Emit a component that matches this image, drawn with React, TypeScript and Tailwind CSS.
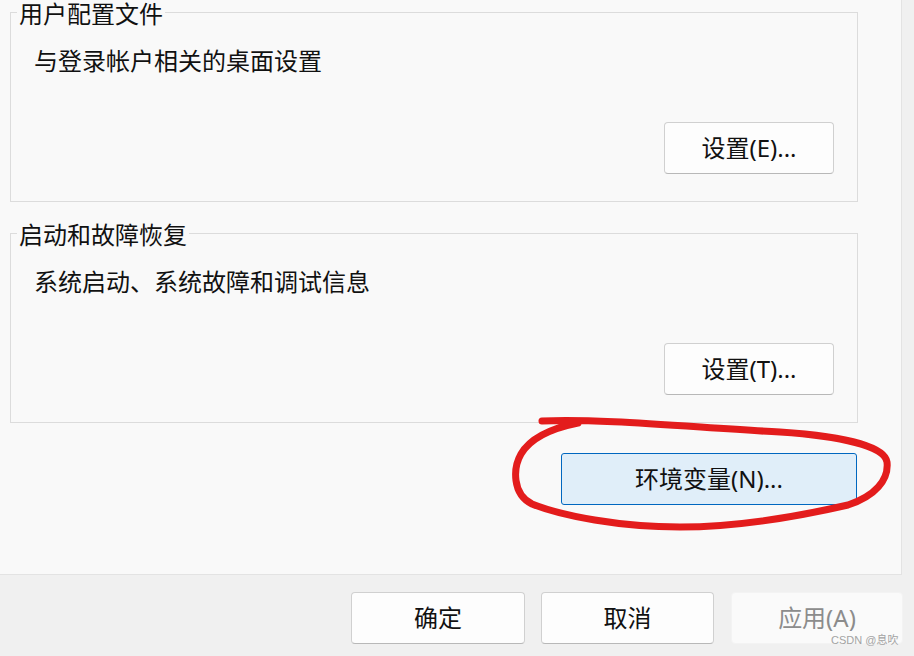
import React from "react";

const font = { fontFamily: '"Noto Sans", "Noto Sans CJK SC", sans-serif' };

function Btn({ children, className = "" }: { children: React.ReactNode; className?: string }) {
  return (
    <button
      className={
        "h-[52px] rounded-[4px] border border-[#d0d0d0] border-b-[#b8b8b8] bg-[#fdfdfd] text-[24px] leading-[30px] text-[#111111] flex items-center justify-center " +
        className
      }
    >
      {children}
    </button>
  );
}

function Group({ title, desc, btn }: { title: string; desc: string; btn: string }) {
  return (
    <fieldset className="m-0 w-[848px] h-[202px] border border-[#dcdcdc] p-0 min-w-0">
      <legend className="ml-[6px] px-[2px] text-[24px] leading-[24px] text-[#111111]">
        <span className="inline-block translate-y-[2px]">{title}</span>
      </legend>
      <div className="flex flex-col">
        <div className="mt-[21px] pl-[23px] text-[24px] leading-[32px] text-[#111111]">{desc}</div>
        <div className="mt-[45px] flex justify-end pr-[23px]">
          <Btn className="w-[170px]">{btn}</Btn>
        </div>
      </div>
    </fieldset>
  );
}

export default function App() {
  return (
    <div className="relative w-[914px] h-[656px] overflow-hidden bg-[#f0f0f0] flex flex-col" style={font}>
      <div className="flex">
        <div className="w-[902px] h-[575px] bg-[#f9f9f9] border-r border-b border-[#e3e3e3] pl-[10px] flex flex-col">
          <Group title="用户配置文件" desc="与登录帐户相关的桌面设置" btn="设置(E)..." />
          <div className="mt-[19px]">
            <Group title="启动和故障恢复" desc="系统启动、系统故障和调试信息" btn="设置(T)..." />
          </div>
          <div className="w-[847px] mt-[30px] flex justify-end">
            <button className="w-[296px] h-[52px] rounded-[3px] border border-[#0067c0] bg-[#e0eef9] text-[24px] leading-[30px] text-[#111111] flex items-center justify-center">
              环境变量(N)...
            </button>
          </div>
        </div>
      </div>
      <div className="mt-[17px] flex pl-[351px]">
        <Btn className="w-[174px]">确定</Btn>
        <Btn className="w-[173px] ml-[16px]">取消</Btn>
        <button className="ml-[17px] w-[172px] h-[52px] rounded-[4px] border border-[#f3f3f3] bg-[#fafafa] text-[24px] leading-[30px] text-[#8c8c8c] flex items-center justify-center">
          应用(A)
        </button>
      </div>
      <div
        className="absolute left-[831px] top-[633px] text-[11px] leading-[14px] text-[#a3a3a3]"
        style={{ fontFamily: '"Liberation Sans", "Noto Sans CJK SC", sans-serif' }}
      >
        CSDN @息吹
      </div>
      <svg className="absolute left-0 top-0 pointer-events-none" width="914" height="656">
        <path
          d="M 542 421 C 600 418, 700 428, 780 432 C 840 436, 885 446, 887 462 C 889 480, 875 496, 848 505 C 800 516, 740 527, 680 527 C 620 527, 562 516, 532 504 C 512 494, 513 468, 521 454 C 531 437, 553 428, 578 423"
          fill="none"
          stroke="#e31c1c"
          strokeWidth="7"
          strokeLinecap="round"
          strokeLinejoin="round"
        />
      </svg>
    </div>
  );
}
